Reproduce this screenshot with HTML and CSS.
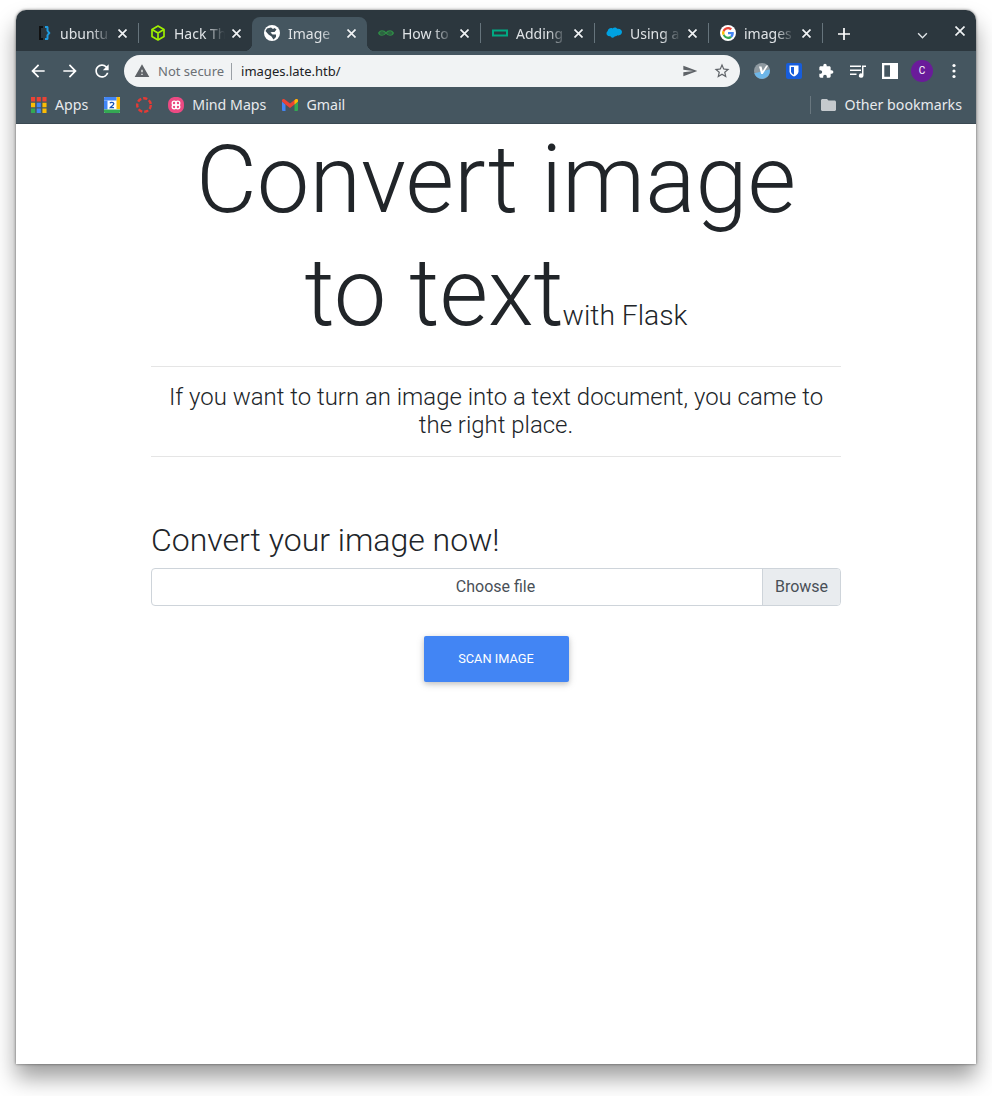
FILE: index.html
```html
<!DOCTYPE html>
<html lang="en">
<head>
    <meta charset="UTF-8">
    <meta name="viewport" content="width=device-width, initial-scale=1.0">
    <title>Image Reader</title>
    <link rel="stylesheet" href="styles.css">
</head>
<body>
    <div class="window">
        <div class="tabstrip">
            <div class="tab">
                <svg class="favicon" viewBox="0 0 16 16"><path d="M7 1H3v14h4v-2H5V3h2z" fill="#0b0f12"/><path d="M7 1H3v14h1V2h3z" fill="#111"/><path d="M9 1h2c1 0 1.500.6 1.500 1.500v3L14.500 8l-2 2.500v3c0 .9-.5 1.500-1.500 1.500H9v-2h1.500v-3L12 8l-1.500-2V3H9z" fill="#1e9be0"/></svg>
                <span class="tab-title">ubuntu</span>
                <svg class="tab-close" viewBox="0 0 9 9"><path d="M.5.500l8 8M8.500.500l-8 8"/></svg>
            </div>
            <i class="tab-sep"></i>
            <div class="tab">
                <svg class="favicon" viewBox="0 0 16 16" fill="none" stroke="#9fef00" stroke-width="1.700" stroke-linejoin="round"><path d="M8 1l6 3.500v7L8 15l-6-3.500v-7z"/><path d="M2 4.500L8 8l6-3.500M8 8v7"/></svg>
                <span class="tab-title">Hack Th</span>
                <svg class="tab-close" viewBox="0 0 9 9"><path d="M.5.500l8 8M8.500.500l-8 8"/></svg>
            </div>
            <i class="tab-sep off"></i>
            <div class="tab active">
                <svg class="favicon" viewBox="0 0 16 16"><circle cx="8" cy="8" r="8" fill="#fff"/><path d="M7 2.500l2 1.500 1.500-1 2 1.500-2 2.500H8L6.500 7.500 8.500 9.500h3.500v2.500l-2.500 2.500-2-3-3-2-3-3.500 1.500-2.500z" fill="#3f4f59"/></svg>
                <span class="tab-title">Image</span>
                <svg class="tab-close" viewBox="0 0 9 9"><path d="M.5.500l8 8M8.500.500l-8 8"/></svg>
            </div>
            <i class="tab-sep off"></i>
            <div class="tab">
                <svg class="favicon" viewBox="0 0 16 16" fill="none" stroke="#2f8d46" stroke-width="1.200"><path d="M0 8h16"/><path d="M8 8c-1-1.500-2.500-2.200-4-2.200S1 6.800 1 8s1.400 2.200 3 2.200S7 9.500 8 8c1 1.500 2.400 2.200 4 2.200s3-1 3-2.200-1.400-2.200-3-2.200S9 6.500 8 8z"/></svg>
                <span class="tab-title">How to</span>
                <svg class="tab-close" viewBox="0 0 9 9"><path d="M.5.500l8 8M8.500.500l-8 8"/></svg>
            </div>
            <i class="tab-sep"></i>
            <div class="tab">
                <svg class="favicon" viewBox="0 0 16 16"><path d="M0 4.500h16v7H0zm2 2v3h12v-3z" fill="#01a982" fill-rule="evenodd"/></svg>
                <span class="tab-title">Adding</span>
                <svg class="tab-close" viewBox="0 0 9 9"><path d="M.5.500l8 8M8.500.500l-8 8"/></svg>
            </div>
            <i class="tab-sep"></i>
            <div class="tab">
                <svg class="favicon" viewBox="0 0 16 16"><path d="M6.500 3.500c.6-.7 1.500-1 2.300-1 1 0 1.900.5 2.400 1.300 2.400-.6 4.800.9 4.800 3.300 0 2.500-2.600 4-4.700 3.100-.5.800-1.500 1.300-2.400 1.100-.5 1-1.500 1.500-2.500 1.400-1-.1-1.900-.7-2.200-1.600C1.800 11.400.5 10 .5 8.500c0-1 .5-1.900 1.300-2.400C1.500 4.200 4.600 2.200 6.500 3.500z" fill="#00a1e0"/></svg>
                <span class="tab-title">Using a</span>
                <svg class="tab-close" viewBox="0 0 9 9"><path d="M.5.500l8 8M8.500.500l-8 8"/></svg>
            </div>
            <i class="tab-sep"></i>
            <div class="tab">
                <svg class="favicon" viewBox="0 0 16 16"><circle cx="8" cy="8" r="8" fill="#fff"/><path d="M13.800 8.200c0-.4 0-.8-.1-1.200H8v2.300h3.300c-.2.800-.6 1.400-1.200 1.800l1.800 1.400c1.200-1 1.900-2.500 1.900-4.300z" fill="#4285f4"/><path d="M8 14c1.600 0 2.900-.5 3.900-1.500l-1.800-1.400c-.5.400-1.200.6-2.100.6-1.600 0-2.900-1-3.400-2.500L2.700 10.100C3.700 12.400 5.700 14 8 14z" fill="#34a853"/><path d="M4.600 9.200c-.3-.8-.3-1.600 0-2.400L2.700 5.400c-.9 1.600-.9 3.500 0 4.700z" fill="#fbbc05"/><path d="M8 4.300c.9 0 1.700.3 2.300.9l1.700-1.700C10.900 2.500 9.600 2 8 2 5.700 2 3.700 3.400 2.700 5.400l1.900 1.400C5.100 5.300 6.400 4.300 8 4.300z" fill="#ea4335"/></svg>
                <span class="tab-title">images</span>
                <svg class="tab-close" viewBox="0 0 9 9"><path d="M.5.500l8 8M8.500.500l-8 8"/></svg>
            </div>
            <i class="tab-sep"></i>
            <svg class="new-tab" viewBox="0 0 14 14"><path d="M6 0h2v6h6v2H8v6H6V8H0V6h6z" fill="#fff"/></svg>
            <svg class="tab-search" viewBox="0 0 12 8" fill="none" stroke="#dfe3e6" stroke-width="1.600"><path d="M1 1.500l5 5 5-5"/></svg>
            <svg class="window-close" viewBox="0 0 10 10" stroke="#eef1f3" stroke-width="1.700"><path d="M.5.500l9 9M9.500.500l-9 9"/></svg>
        </div>

        <div class="toolbar">
            <svg class="tool" viewBox="0 0 24 24"><path d="M20 11H7.830l5.590-5.590L12 4l-8 8 8 8 1.410-1.410L7.830 13H20v-2z"/></svg>
            <svg class="tool" viewBox="0 0 24 24"><path d="M12 4l-1.410 1.410L16.170 11H4v2h12.170l-5.580 5.590L12 20l8-8z"/></svg>
            <svg class="tool" viewBox="0 0 24 24"><path d="M17.650 6.350A7.958 7.958 0 0 0 12 4c-4.420 0-7.990 3.580-7.990 8s3.570 8 7.990 8c3.730 0 6.840-2.550 7.730-6h-2.080A5.990 5.990 0 0 1 12 18c-3.310 0-6-2.690-6-6s2.690-6 6-6c1.660 0 3.140.690 4.220 1.780L13 11h7V4l-2.350 2.350z"/></svg>
            <div class="omnibox">
                <svg class="omni-warn" viewBox="0 0 24 24"><path d="M1 21h22L12 2 1 21zm12-3h-2v-2h2v2zm0-4h-2v-4h2v4z"/></svg>
                <span class="not-secure">Not secure</span>
                <span class="url">images.late.htb/</span>
                <svg class="omni-send" viewBox="0 0 24 24"><path d="M2.010 20L23 12 2.010 4 2 10.200l15 1.800-15 1.800z"/></svg>
                <svg class="omni-star" viewBox="0 0 24 24"><path d="M22 9.240l-7.190-.62L12 2 9.190 8.630 2 9.240l5.460 4.730L5.820 21 12 17.270 18.180 21l-1.630-7.030L22 9.240zM12 15.400l-3.760 2.270 1-4.280-3.320-2.880 4.380-.38L12 6.100l1.710 4.040 4.380.38-3.320 2.880 1 4.280L12 15.400z"/></svg>
            </div>
            <div class="extensions">
                <svg class="ext" viewBox="0 0 16 16"><circle cx="8" cy="8" r="8" fill="#8f9aa1"/><path d="M.3 10.200L15.800 6.500A8 8 0 0 1 .3 10.200z" fill="#6db6e8"/><path d="M5 3.500h2.500L8.700 8l3.500-5.500h2L8.800 11H7.200z" fill="#fff"/></svg>
                <svg class="ext" viewBox="0 0 16 16"><rect width="16" height="16" rx="2" fill="#175ddc"/><path d="M3.500 2.500h9v6c0 2.500-2.500 4-4.500 5-2-1-4.500-2.500-4.500-5z" fill="#fff"/><path d="M8 4H5v4.500c0 1.500 1.500 2.500 3 3.300z" fill="#175ddc"/></svg>
                <svg class="ext" viewBox="0 0 24 24"><path d="M20.500 11H19V7c0-1.100-.9-2-2-2h-4V3.500C13 2.120 11.880 1 10.500 1S8 2.120 8 3.500V5H4c-1.100 0-1.990.9-1.990 2v3.800H3.500c1.490 0 2.700 1.210 2.700 2.700s-1.210 2.700-2.700 2.700H2V20c0 1.100.9 2 2 2h3.800v-1.500c0-1.490 1.210-2.700 2.700-2.700 1.490 0 2.700 1.210 2.700 2.700V22H17c1.100 0 2-.9 2-2v-4h1.500c1.380 0 2.500-1.120 2.500-2.500S21.880 11 20.500 11z" fill="#fff"/></svg>
                <svg class="ext" viewBox="0 0 16 16" fill="#fff"><path d="M0 2.500h11v1.500H0zM0 6.500h11V8H0zM0 10.500h6.500V12H0zM12 2.500h4V4h-2.500v8.500a2.300 2.300 0 1 1-1.500-2.100z"/></svg>
                <svg class="ext" viewBox="0 0 14 14"><path d="M0 0h14v14H0zm2 2v10h5V2z" fill="#fff" fill-rule="evenodd"/></svg>
                <span class="avatar">C</span>
                <svg class="ext" viewBox="0 0 16 16" fill="#fff"><circle cx="8" cy="2.500" r="1.600"/><circle cx="8" cy="8" r="1.600"/><circle cx="8" cy="13.500" r="1.600"/></svg>
            </div>
        </div>

        <div class="bookmarks">
            <div class="bookmark">
                <svg class="bm-icon" viewBox="0 0 14 14">
                    <path d="M0 0h3.600v4H0z" fill="#ea4335"/><path d="M5 0h3.600v4H5z" fill="#ea4335"/><path d="M10 0h3.600v4H10z" fill="#ea4335"/>
                    <path d="M0 5h3.600v4H0z" fill="#fbbc05"/><path d="M5 5h3.600v4H5z" fill="#4285f4"/><path d="M10 5h3.600v4H10z" fill="#fbbc05"/>
                    <path d="M0 10h3.600v4H0z" fill="#34a853"/><path d="M5 10h3.600v4H5z" fill="#4285f4"/><path d="M10 10h3.600v4H10z" fill="#fbbc05"/>
                </svg>
                <span>Apps</span>
            </div>
            <svg class="bm-icon solo" viewBox="0 0 16 16">
                <rect width="16" height="16" rx="1" fill="#fff"/><path d="M12.500 0H15a1 1 0 0 1 1 1v11h-3.500z" fill="#fbbc04"/><path d="M1 0h11.500v3.500H0V1a1 1 0 0 1 1-1z" fill="#4285f4"/><path d="M0 3.500h3.500v9H0z" fill="#4285f4"/><path d="M0 12.500h16V15a1 1 0 0 1-1 1H1a1 1 0 0 1-1-1z" fill="#34a853"/>
                <path d="M6 6.200c.4-1.200 3.600-1.200 3.800.5.100 1.200-2.400 2.700-3.500 4h3.700" fill="none" stroke="#1a56b8" stroke-width="1.300"/>
            </svg>
            <svg class="bm-icon solo" viewBox="0 0 16 16" fill="none" stroke="#e53a35" stroke-width="2.400" stroke-dasharray="4.200 2"><circle cx="8" cy="8" r="6.800"/></svg>
            <div class="bookmark">
                <svg class="bm-icon" viewBox="0 0 16 16"><path d="M8 0c3 0 4.500.5 6 2s2 3 2 6-.5 4.500-2 6-3 2-6 2-4.500-.5-6-2-2-3-2-6 .5-4.500 2-6 3-2 6-2z" fill="#ec4a83"/><g fill="none" stroke="#fff" stroke-width="1.300"><circle cx="6.200" cy="6.200" r="2"/><circle cx="9.800" cy="6.200" r="2"/><circle cx="6.200" cy="9.800" r="2"/><circle cx="9.800" cy="9.800" r="2"/></g></svg>
                <span>Mind Maps</span>
            </div>
            <div class="bookmark">
                <svg class="bm-icon" viewBox="0 0 16 16"><path d="M0 4.500V13a1 1 0 0 0 1 1h2.500V7.500z" fill="#4285f4"/><path d="M12.500 7.500V14H15a1 1 0 0 0 1-1V4.500z" fill="#34a853"/><path d="M0 3.500C0 2 1.600 1.600 2.500 2.300L8 6.500l5.500-4.200c1-.7 2.500-.3 2.500 1.200v1L12.500 7.500 8 11 3.500 7.500 0 4.500z" fill="#ea4335"/><path d="M12.500 3.500l1-1.200c1-.7 2.500-.3 2.500 1.200v1l-3.500 3z" fill="#fbbc04"/></svg>
                <span>Gmail</span>
            </div>
            <div class="other-bookmarks">
                <svg class="bm-folder" viewBox="2 4 20 16"><path d="M10 4H4c-1.100 0-1.990.9-1.990 2L2 18c0 1.100.9 2 2 2h16c1.100 0 2-.9 2-2V8c0-1.100-.9-2-2-2h-8l-2-2z"/></svg>
                <span>Other bookmarks</span>
            </div>
        </div>

        <main class="page">
            <div class="container">
                <h1 class="display">Convert image to text <small class="display-small">with Flask</small></h1>
                <hr class="rule">
                <p class="lead">If you want to turn an image into a text document, you came to the right place.</p>
                <hr class="rule">
                <h3 class="form-title">Convert your image now!</h3>
                <div class="file-input">
                    <span class="file-label">Choose file</span>
                    <span class="file-browse">Browse</span>
                </div>
                <button class="scan-btn">SCAN IMAGE</button>
            </div>
        </main>
    </div>
</body>
</html>
```

FILE: styles.css
```css
html, body {
    margin: 0;
    padding: 0;
    background-color: #fff;
}
body {
    padding: 10px 16px 32px;
    height: 1096px;
    box-sizing: border-box;
    overflow: hidden;
}
.window {
    height: 1054px;
    display: flex;
    flex-direction: column;
    border-radius: 10px 10px 0 0;
    box-shadow: 0 14px 22px rgba(0, 0, 0, 0.38), 0 0 3px rgba(0, 0, 0, 0.55);
    background-color: #fff;
    overflow: hidden;
    font-family: "Noto Sans", sans-serif;
}

/* tab strip */
.tabstrip {
    height: 41px;
    box-sizing: border-box;
    padding: 7px 0 0 9px;
    display: flex;
    align-items: center;
    background-color: #2c373e;
    position: relative;
}
.tab {
    width: 113px;
    height: 34px;
    box-sizing: border-box;
    padding: 0 7px 2px 11px;
    display: flex;
    align-items: center;
    gap: 8px;
    color: #dfe3e6;
    font-size: 14px;
    position: relative;
}
.tab.active {
    background-color: #455660;
    border-radius: 8px 8px 0 0;
    width: 115px;
    margin: 0 -1px;
    padding-left: 12px;
}
.tab.active::before,
.tab.active::after {
    content: "";
    position: absolute;
    bottom: 0;
    width: 8px;
    height: 8px;
}
.tab.active::before {
    left: -8px;
    background: radial-gradient(circle at 0 0, transparent 8px, #455660 8.5px);
}
.tab.active::after {
    right: -8px;
    background: radial-gradient(circle at 100% 0, transparent 8px, #455660 8.5px);
}
.favicon {
    width: 16px;
    height: 16px;
    flex: none;
}
.tab-title {
    flex: 1;
    overflow: hidden;
    white-space: nowrap;
    margin-right: -5px;
    -webkit-mask-image: linear-gradient(to right, #000 62%, transparent 100%);
    mask-image: linear-gradient(to right, #000 62%, transparent 100%);
}
.tab-close {
    width: 9px;
    height: 9px;
    margin: 0 4px;
    stroke: #f0f2f4;
    stroke-width: 1.700;
    flex: none;
}
.tab-sep {
    width: 1px;
    height: 20px;
    background-color: #66747c;
    flex: none;
    margin-top: -2px;
}
.tab-sep.off {
    background-color: transparent;
}
.new-tab {
    width: 12px;
    height: 12px;
    margin-left: 15px;
}
.tab-search {
    width: 11px;
    height: 7px;
    margin-left: 67px;
    margin-top: 2px;
}
.window-close {
    width: 10px;
    height: 10px;
    margin-left: 27px;
    margin-top: -7px;
}

/* toolbar */
.toolbar {
    height: 39px;
    box-sizing: border-box;
    padding: 4px 0 3px 12px;
    display: flex;
    align-items: center;
    gap: 12px;
    background-color: #455660;
}
.tool {
    width: 20px;
    height: 20px;
    fill: #fff;
    flex: none;
}
.omnibox {
    width: 616px;
    height: 32px;
    box-sizing: border-box;
    padding: 0 9px 0 10px;
    display: flex;
    align-items: center;
    border-radius: 16px;
    background-color: #f1f3f4;
    font-size: 13px;
    flex: none;
}
.omni-warn {
    width: 16px;
    height: 16px;
    fill: #5f6368;
    flex: none;
}
.not-secure {
    margin-left: 8px;
    padding-right: 7px;
    border-right: 1px solid #9aa0a6;
    color: #6b7075;
    line-height: 17px;
}
.url {
    margin-left: 9px;
    color: #202124;
    flex: 1;
}
.omni-send {
    width: 16px;
    height: 16px;
    fill: #5f6368;
}
.omni-star {
    width: 18px;
    height: 18px;
    fill: #5f6368;
    margin-left: 15px;
}
.extensions {
    display: flex;
    align-items: center;
    gap: 16px;
    margin-left: 2px;
}
.ext {
    width: 16px;
    height: 16px;
    flex: none;
}
.avatar {
    width: 22px;
    height: 22px;
    margin: 0 -3px;
    border-radius: 50%;
    background-color: #6a1b9a;
    color: #fff;
    font-size: 10px;
    text-align: center;
    line-height: 22px;
    font-family: Roboto, sans-serif;
    flex: none;
}

/* bookmarks */
.bookmarks {
    height: 34px;
    box-sizing: border-box;
    padding: 0 14px 4px 15px;
    display: flex;
    align-items: center;
    gap: 16px;
    background-color: #455660;
    border-bottom: 1px solid #3a4952;
    color: #e8eaed;
    font-size: 14.200px;
}
.bookmark {
    display: flex;
    align-items: center;
    gap: 8px;
}
.bm-icon {
    width: 16px;
    height: 16px;
    flex: none;
}
.other-bookmarks {
    margin-left: auto;
    padding-left: 10px;
    border-left: 1px solid #69777f;
    display: flex;
    align-items: center;
    gap: 9px;
    line-height: 18px;
}
.bm-folder {
    width: 15px;
    height: 12px;
    fill: #c4c9cd;
}

/* page */
.page {
    flex: 1;
    font-family: Roboto, sans-serif;
    color: #212529;
}
.container {
    width: 690px;
    margin: 0 auto;
    text-align: center;
}
.display {
    margin: 0;
    font-size: 93.800px;
    font-weight: 300;
    line-height: 113px;
    word-spacing: 0;
}
.display-small {
    font-size: 28.300px;
    font-weight: 300;
    line-height: 1;
    margin-left: -24px;
}
.rule {
    margin: 0;
    border: 0;
    border-top: 1px solid rgba(0, 0, 0, 0.1);
}
.display + .rule {
    margin-top: 16px;
}
.lead {
    margin: 16px 0 17px;
    font-size: 23.950px;
    font-weight: 300;
    line-height: 28px;
}
.form-title {
    margin: 64px 0 9px;
    font-size: 32px;
    font-weight: 300;
    line-height: 38px;
    text-align: left;
}
.file-input {
    height: 38px;
    box-sizing: border-box;
    display: flex;
    border: 1px solid #ced4da;
    border-radius: 4px;
    color: #495057;
    font-size: 16px;
    line-height: 36px;
    overflow: hidden;
}
.file-label {
    flex: 1;
    padding-left: 77px;
}
.file-browse {
    width: 77px;
    border-left: 1px solid #ced4da;
    background-color: #e9ecef;
}
.scan-btn {
    display: block;
    width: 145px;
    height: 46px;
    margin: 30px auto 0;
    padding: 0 0 2px;
    border: none;
    border-radius: 2px;
    background-color: #4285f4;
    color: #fff;
    font-family: Roboto, sans-serif;
    font-size: 12.800px;
    box-shadow: 0 2px 5px 0 rgba(0, 0, 0, 0.16), 0 2px 10px 0 rgba(0, 0, 0, 0.12);
    cursor: pointer;
}
```
